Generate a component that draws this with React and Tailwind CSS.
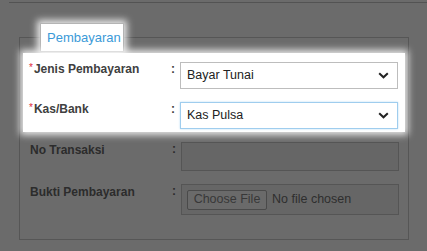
import { useState } from 'react';

const Chevron = () => (
    <svg width="11" height="7" viewBox="0 0 11 7" className="shrink-0">
        <path d="M1.2 1.2 L5.5 5.3 L9.8 1.2" fill="none" stroke="#222" strokeWidth="2" />
    </svg>
);

const Label = ({ required, children, dim }) => (
    <div className={`w-[142px] h-[15px] leading-[15px] flex ${dim ? 'text-[#2c2c2c]' : 'text-[#404040]'}`}>
        {required && <span className="text-[#e0283a] text-[10px] leading-[12px] mr-[1px]">*</span>}
        <span className="font-bold">{children}</span>
    </div>
);

const Colon = ({ dim }) => (
    <div className={`w-[9px] h-[15px] leading-[15px] font-bold ${dim ? 'text-[#2c2c2c]' : 'text-[#404040]'}`}>:</div>
);

const Select = ({ value, focused }) => (
    <div
        className={`w-[218px] h-[27px] flex items-center justify-between pl-[6px] pr-[8px] bg-white border text-[#222] text-[12.5px] ${focused ? 'border-[#9fcdee] shadow-[0_0_2px_#b8dcf5]' : 'border-[#bdbdbd]'}`}
    >
        <span>{value}</span>
        <Chevron />
    </div>
);

export default function App() {
    const [jenis] = useState('Bayar Tunai');
    const [kas] = useState('Kas Pulsa');

    return (
        <div className="w-[427px] h-[251px] overflow-hidden bg-[#6b6b6b] text-[12px] font-['Liberation_Sans',Arial,sans-serif]">
            {/* page edge */}
            <div className="mt-[2px] ml-[9px] border-t border-[#535353]" />

            {/* fieldset */}
            <div className="mt-[34px] ml-[19px] w-[390px] h-[203px] border border-[#565656]">
                <div className="-mt-[15px] ml-[20px] w-[84px] h-[29px] bg-white border border-[#b4b4b4] shadow-[0_0_7px_3px_rgba(255,255,255,0.85)] flex items-center pl-[6px] text-[13px] text-[#3b9ad8]">
                    Pembayaran
                </div>

                {/* highlighted rows */}
                <div className="mt-[1px] ml-[3px] w-[382px] h-[79px] bg-white shadow-[0_0_7px_3px_rgba(255,255,255,0.85)] pt-[9px] pl-[6px] flex flex-col gap-[13px]">
                    <div className="flex items-start">
                        <Label required>Jenis Pembayaran</Label>
                        <Colon />
                        <Select value={jenis} />
                    </div>
                    <div className="flex items-start">
                        <Label required>Kas/Bank</Label>
                        <Colon />
                        <Select value={kas} focused />
                    </div>
                </div>

                {/* dimmed rows */}
                <div className="mt-[10px] ml-[10px] flex flex-col gap-[13px]">
                    <div className="flex items-start">
                        <div className="w-[142px] h-[15px] leading-[15px] mt-[1px] font-bold text-[#2c2c2c]">No Transaksi</div>
                        <Colon dim />
                        <div className="w-[218px] h-[29px] bg-[#666] border border-[#555]" />
                    </div>
                    <div className="flex items-start">
                        <div className="w-[142px] h-[15px] leading-[15px] mt-[1px] font-bold text-[#2c2c2c]">Bukti Pembayaran</div>
                        <Colon dim />
                        <div className="w-[218px] h-[31px] bg-[#666] border border-[#555] flex items-center pl-[5px] gap-[5px]">
                            <div className="w-[80px] h-[20px] border border-[#4a4a4a] bg-[#6a6a6a] rounded-[2px] flex items-center justify-center text-[#383838] text-[12.5px]">
                                Choose File
                            </div>
                            <span className="text-[#2e2e2e] text-[12.5px]">No file chosen</span>
                        </div>
                    </div>
                </div>
            </div>
        </div>
    );
}
